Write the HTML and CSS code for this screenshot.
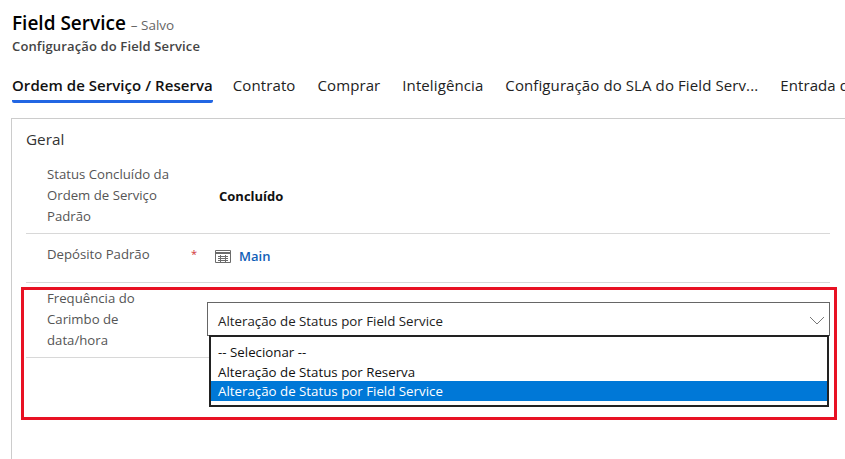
FILE: index.html
```html
<!DOCTYPE html>
<html lang="pt">
<head>
    <meta charset="UTF-8">
    <meta name="viewport" content="width=device-width, initial-scale=1.0">
    <title>Configuração do Field Service</title>
    <link rel="stylesheet" href="styles.css">
</head>
<body>
    <header class="page-header">
        <h1 class="page-title">Field Service <span class="page-status">– Salvo</span></h1>
        <div class="page-subtitle">Configuração do Field Service</div>
    </header>

    <nav class="tabs">
        <a class="tab tab--active">Ordem de Serviço / Reserva</a>
        <a class="tab">Contrato</a>
        <a class="tab">Comprar</a>
        <a class="tab">Inteligência</a>
        <a class="tab">Configuração do SLA do Field Serv...</a>
        <a class="tab">Entrada de Agenda</a>
    </nav>

    <section class="panel">
        <h2 class="panel-title">Geral</h2>

        <div class="row row--status">
            <div class="row-label">Status Concluído da Ordem de Serviço Padrão</div>
            <div class="row-value row-value--bold">Concluído</div>
        </div>

        <div class="row row--warehouse">
            <div class="row-label">Depósito Padrão</div>
            <span class="required">*</span>
            <div class="row-value row-value--lookup">
                <svg class="lookup-icon" width="16" height="13" viewBox="0 0 16 13" fill="none" stroke="#6b6b6b" stroke-width="1">
                    <path d="M.5.5h15v12H.5z"/>
                    <path d="M1 3h14" stroke-width="2"/>
                    <path d="M3 6.5h10M3 8.5h10M3 10.5h10M5.5 5v7M10.5 5v7"/>
                </svg>
                <a class="lookup-link">Main</a>
            </div>
        </div>

        <div class="row row--frequency">
            <div class="row-label">Frequência do Carimbo de data/hora</div>
        </div>

        <div class="select">
            <span class="select-text">Alteração de Status por Field Service</span>
            <svg class="select-chevron" width="16" height="9" viewBox="0 0 16 9" fill="none" stroke="#777" stroke-width="1">
                <path d="M1 1l7 7 7-7"/>
            </svg>
        </div>
        <ul class="select-list">
            <li class="select-option">-- Selecionar --</li>
            <li class="select-option">Alteração de Status por Reserva</li>
            <li class="select-option select-option--active">Alteração de Status por Field Service</li>
        </ul>
    </section>

    <div class="callout"></div>
</body>
</html>
```

FILE: styles.css
```css
html, body {
    height: 100%;
}

body {
    margin: 0;
    position: relative;
    overflow: hidden;
    background-color: #fff;
    color: #000;
    font-family: "Open Sans", "Noto Sans", sans-serif;
}

.page-header {
    height: 62px;
    padding: 9px 0 0 12px;
    box-sizing: border-box;
}

.page-title {
    margin: 0;
    height: 28px;
    font-size: 19px;
    line-height: 28px;
    font-weight: 600;
}

.page-status {
    font-size: 13.5px;
    font-weight: 400;
    color: #666;
}

.page-subtitle {
    font-size: 13px;
    line-height: 19px;
    font-weight: 600;
    letter-spacing: .14px;
    color: #444;
}

.tabs {
    display: flex;
    gap: 22px;
    height: 56px;
    padding: 12px 0 0 12px;
    box-sizing: border-box;
    white-space: nowrap;
    overflow: hidden;
}

.tab {
    height: 26px;
    font-size: 15px;
    line-height: 23px;
    letter-spacing: .1px;
    color: #222;
}

.tab--active {
    margin-right: -2px;
    font-weight: 600;
    letter-spacing: .05px;
    color: #111;
    border-bottom: 3px solid #2266e3;
    border-radius: 2px;
}

.panel {
    position: relative;
    height: 341px;
    margin-left: 11px;
    padding: 8px 15px 0 14px;
    box-sizing: border-box;
    border-top: 1px solid #ccc;
    border-left: 1px solid #ccc;
}

.panel-title {
    margin: 0 0 13px;
    height: 24px;
    font-size: 15.3px;
    line-height: 24px;
    font-weight: 400;
    color: #333;
}

.row {
    display: flex;
    border-bottom: 1px solid #d8d8d8;
    font-size: 13.2px;
    line-height: 21px;
    color: #555;
}

.row-label {
    width: 126px;
    margin-left: 21px;
}

.row--status {
    height: 69px;
}

.row--status .row-value {
    margin-left: 46px;
    padding-top: 22px;
    font-size: 13px;
}

.row--warehouse {
    height: 48px;
}

.row--warehouse .row-label {
    padding-top: 10px;
}

.row--frequency {
    height: 75px;
    padding-top: 5px;
    box-sizing: border-box;
    width: 190px;
}

.required {
    margin-left: 18px;
    padding-top: 9px;
    font-size: 11px;
    color: #d13438;
}

.row-value--bold {
    font-weight: 700;
    color: #111;
}

.row-value--lookup {
    display: flex;
    align-items: center;
    gap: 8px;
    height: 21px;
    padding-top: 12px;
    margin-left: 18px;
    font-size: 13px;
}

.lookup-link {
    font-weight: 600;
    color: #1160b7;
}

.select {
    position: absolute;
    left: 195px;
    top: 183px;
    width: 623px;
    height: 34px;
    display: flex;
    align-items: center;
    justify-content: space-between;
    padding: 0 4px 0 10px;
    box-sizing: border-box;
    background: #fff;
    border: 1px solid #666;
    font-size: 13.3px;
    color: #222;
}

.select-text {
    padding-top: 3px;
}

.select-chevron {
    margin-top: 2px;
}

.select-list {
    position: absolute;
    left: 197px;
    top: 216px;
    width: 620px;
    height: 72px;
    margin: 0;
    padding: 5px 0 0;
    box-sizing: border-box;
    list-style: none;
    background: #fff;
    border: 2px solid #222;
    font-size: 13.3px;
    line-height: 20px;
    color: #111;
}

.select-option {
    height: 19.5px;
    padding-left: 7px;
}

.select-option--active {
    background: #0078d7;
    color: #fff;
}

.callout {
    position: absolute;
    left: 21px;
    top: 287px;
    width: 816px;
    height: 133px;
    box-sizing: border-box;
    border: 3px solid #e81123;
    pointer-events: none;
}
```
